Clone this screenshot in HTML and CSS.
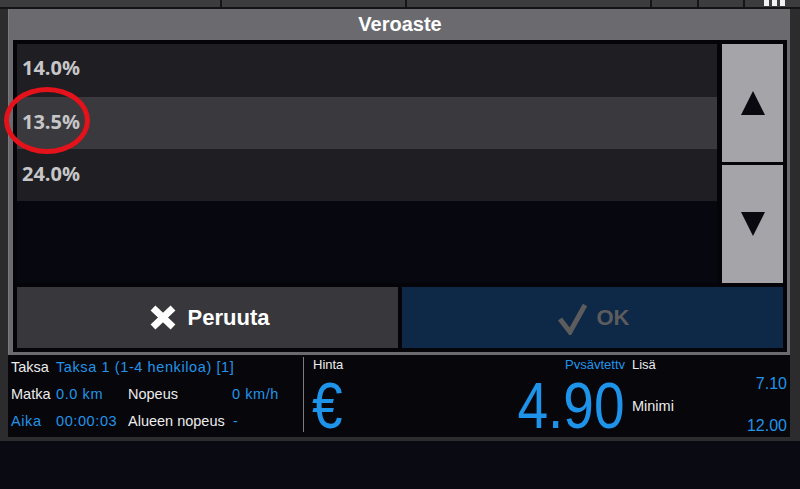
FILE: index.html
```html
<!DOCTYPE html>
<html lang="fi">
<head>
<meta charset="utf-8">
<title>Veroaste</title>
<link rel="stylesheet" href="styles.css">
</head>
<body>
<div class="screen">
  <div class="topbar">
    <div class="seg seg-a"></div>
    <div class="seg seg-b"></div>
    <div class="seg seg-c"></div>
    <div class="seg seg-d"></div>
    <div class="seg seg-e"></div>
    <div class="seg seg-f"><span class="bars"><i></i><i></i><i></i></span></div>
  </div>
  <div class="main">
    <div class="dialog">
      <div class="title">Veroaste</div>
      <div class="panel">
        <div class="upper">
          <div class="list">
            <div class="row">14.0%</div>
            <div class="row sel">13.5%</div>
            <div class="row">24.0%</div>
            <div class="mark"></div>
          </div>
          <div class="scroll">
            <div class="arrow">
              <svg width="26" height="26" viewBox="0 0 26 26"><polygon points="13,1 25,25 1,25" fill="#09090f"/></svg>
            </div>
            <div class="arrow">
              <svg width="26" height="26" viewBox="0 0 26 26"><polygon points="1,1 25,1 13,25" fill="#09090f"/></svg>
            </div>
          </div>
        </div>
        <div class="actions">
          <div class="btn cancel">
            <svg width="28" height="25" viewBox="0 0 28 25"><path d="M4 3 L24 22 M24 3 L4 22" stroke="#fff" stroke-width="7" stroke-linecap="butt"/></svg>
            <span>Peruuta</span>
          </div>
          <div class="btn ok">
            <svg width="30" height="32" viewBox="0 0 30 32"><polyline points="2,16 12,29 27,2" fill="none" stroke="#5c5c5c" stroke-width="5" stroke-linejoin="miter"/></svg>
            <span>OK</span>
          </div>
        </div>
      </div>
    </div>
    <div class="status">
      <div class="trip">
        <span class="lbl">Taksa</span><span class="val span3">Taksa 1 (1-4 henkiloa) [1]</span>
        <span class="lbl">Matka</span><span class="val">0.0 km</span><span class="lbl">Nopeus</span><span class="val end">0 km/h</span>
        <span class="val">Aika</span><span class="val">00:00:03</span><span class="lbl">Alueen nopeus</span><span class="val">-</span>
      </div>
      <div class="price">
        <div class="price-main">
          <div class="price-top">
            <span class="lbl">Hinta</span>
            <span class="val clip">Pysäytetty</span>
          </div>
          <div class="price-big">
            <span class="big euro">€</span>
            <span class="big amount">4.90</span>
          </div>
        </div>
        <div class="extras">
          <div class="lbl x-lisa">Lisä</div>
          <div class="val x-num x-first">7.10</div>
          <div class="lbl x-min">Minimi</div>
          <div class="val x-num">12.00</div>
        </div>
      </div>
    </div>
  </div>
</div>
</body>
</html>
```

FILE: styles.css
```css
* { box-sizing: border-box; }

html, body {
  margin: 0;
  padding: 0;
}

body {
  width: 800px;
  height: 489px;
  overflow: hidden;
  background: #0a0a12;
  font-family: "Liberation Sans", Arial, sans-serif;
}

.screen {
  height: 441px;
  background: #2c2c2f;
}

/* top strip */
.topbar {
  display: flex;
  height: 9px;
  border-bottom: 2px solid #141416;
}
.seg {
  height: 7px;
  background: #3c3c3f;
  border-left: 2px solid #151517;
}
.seg-a { width: 220px; border-left: none; }
.seg-b { width: 185px; }
.seg-c { width: 245px; }
.seg-d { width: 47px; }
.seg-e { width: 46px; }
.seg-f { flex: 1; display: flex; justify-content: center; }
.bars { display: flex; gap: 3px; padding-left: 4px; }
.bars i { display: block; width: 5px; height: 6px; background: #f2f2f2; }

/* main */
.main {
  margin: 0 10px 0 8px;
}

.dialog {
  background: #6a6a6f;
  padding: 0 3px 3px 4px;
  border-left: 1px solid #7a7a7e;
}

.title {
  height: 31px;
  line-height: 31px;
  text-align: center;
  color: #fff;
  font-weight: bold;
  font-size: 20px;
}

.panel {
  background: #050509;
  padding: 4px;
}

.upper {
  display: flex;
  gap: 5px;
  height: 239px;
}

.list {
  position: relative;
  flex: 1;
  background: #07070f;
}

.row {
  height: 52px;
  padding: 0 0 3px 5px;
  display: flex;
  align-items: center;
  background: #1f1f23;
  color: #c6c6c8;
  font-family: "Open Sans", "Noto Sans", sans-serif;
  font-weight: 700;
  font-size: 20px;
}
.row:first-child { height: 53px; padding-bottom: 6px; }
.row.sel { background: #3a3a3e; }

.mark {
  position: absolute;
  left: -13px;
  top: 43px;
  width: 86px;
  height: 67px;
  border: 5px solid #e4121a;
  border-radius: 50%;
}

.scroll {
  width: 61px;
  display: flex;
  flex-direction: column;
  gap: 3px;
}
.arrow {
  flex: 1;
  background: #a5a5a9;
  display: flex;
  align-items: center;
  justify-content: center;
}

.actions {
  margin-top: 4px;
  display: grid;
  grid-template-columns: 1fr 1fr;
  gap: 4px;
  height: 61px;
}
.btn {
  display: flex;
  align-items: center;
  justify-content: center;
  gap: 11px;
  font-weight: bold;
  font-size: 22px;
}
.cancel {
  background: #38383c;
  color: #fff;
}
.cancel span { margin-right: -3px; }
.ok {
  background: #0e2847;
  color: #5c5c5e;
  gap: 9px;
}
.ok svg { margin-top: 2px; margin-left: 2px; }

/* status bar */
.status {
  height: 82px;
  background: #06060b;
  display: flex;
}

.lbl { color: #ececec; }
.val { color: #2394e8; }

.trip {
  width: 295px;
  padding-left: 3px;
  margin-top: -1px;
  display: grid;
  grid-template-columns: 45px 72px 105px 46px;
  grid-auto-rows: 27px;
  align-items: center;
  align-content: start;
  font-size: 14.5px;
  line-height: 27px;
  white-space: nowrap;
}
.trip .val { letter-spacing: 0.6px; }
.span3 { grid-column: 2 / 5; }
.end { justify-self: end; }

.price {
  flex: 1;
  display: flex;
  border-left: 1px solid #7c7c80;
  margin: 2px 0 5px;
  padding: 0 3px 0 9px;
}

.price-main {
  flex: 1;
  margin-right: 7px;
  display: flex;
  flex-direction: column;
}
.price-top {
  display: flex;
  justify-content: space-between;
  font-size: 13px;
  line-height: 15px;
  height: 15px;
}
.clip {
  display: inline-block;
  height: 12px;
  overflow: hidden;
}
.price-big {
  display: flex;
  justify-content: space-between;
  margin-top: 2px;
}
.big {
  color: #1e93ea;
  font-size: 64px;
  line-height: 64px;
  display: inline-block;
}
.euro {
  transform: scaleX(0.86);
  transform-origin: left center;
  margin-left: -1px;
}
.amount {
  transform: scaleX(0.86);
  transform-origin: right center;
}

.extras {
  width: 155px;
  display: flex;
  flex-direction: column;
}
.x-lisa { font-size: 13px; line-height: 15px; }
.x-num {
  font-size: 16px;
  line-height: 20px;
  text-align: right;
}
.x-first { margin-top: 1.5px; }
.x-min { font-size: 14.5px; line-height: 20px; margin-top: 2.5px; }
```
